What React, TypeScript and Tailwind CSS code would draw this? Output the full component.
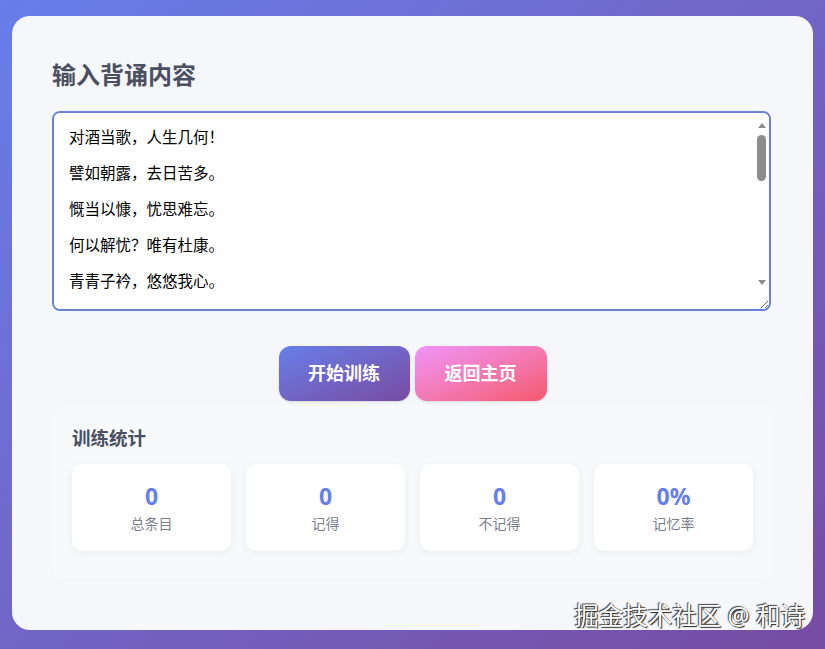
import React, { useState } from 'react';

const defaultText =
  '对酒当歌，人生几何！\n\n譬如朝露，去日苦多。\n\n慨当以慷，忧思难忘。\n\n何以解忧？唯有杜康。\n\n青青子衿，悠悠我心。\n\n但为君故，沉吟至今。\n\n呦呦鹿鸣，食野之苹。\n\n我有嘉宾，鼓瑟吹笙。';

const App: React.FC = () => {
  const [text, setText] = useState(defaultText);
  const stats = [
    { value: '0', label: '总条目' },
    { value: '0', label: '记得' },
    { value: '0', label: '不记得' },
    { value: '0%', label: '记忆率' },
  ];

  return (
    <div
      className="relative w-[825px] h-[649px] bg-gradient-to-br from-[#667eea] to-[#764ba2] px-[12px] pt-[16px]"
      style={{ fontFamily: '"Noto Sans", "Noto Sans CJK SC", sans-serif' }}
    >
      <div className="h-[614px] rounded-[18px] bg-[#f6f7fb] px-[40px] pt-[42px]">
        <h2 className="text-[24px] leading-[34px] font-bold text-[#4a5060]">输入背诵内容</h2>

        <div className="relative mt-[19px] w-[719px]">
          <textarea
            value={text}
            onChange={(e) => setText(e.target.value)}
            className="block w-[719px] h-[200px] resize-y rounded-[8px] border-2 border-[#6b80d8] bg-white pl-[15px] pr-[20px] pt-[14px] pb-2 text-[15.5px] leading-[18px] text-black outline-none"
            style={{ fontFamily: '"Noto Sans CJK SC", "Noto Sans", sans-serif' }}
          />
          {/* scrollbar look */}
          <div className="pointer-events-none absolute right-[2px] top-[2px] bottom-[18px] w-[15px] flex flex-col items-center">
            <div className="mt-[10px] w-0 h-0 border-l-[4px] border-r-[4px] border-b-[5px] border-l-transparent border-r-transparent border-b-[#8d8d8d]" />
            <div className="mt-[7px] w-[9px] h-[46px] rounded-full bg-[#8d8d8d]" />
            <div className="flex-1" />
            <div className="mb-[8px] w-0 h-0 border-l-[4px] border-r-[4px] border-t-[5px] border-l-transparent border-r-transparent border-t-[#8d8d8d]" />
          </div>
        </div>

        <div className="mt-[35px] flex justify-center gap-[5px]">
          <button className="w-[131px] h-[55px] rounded-[12px] bg-gradient-to-br from-[#667eea] to-[#764ba2] text-[18px] font-bold text-white shadow-sm">
            开始训练
          </button>
          <button className="w-[132px] h-[55px] rounded-[12px] bg-gradient-to-br from-[#f093fb] to-[#f5576c] text-[18px] font-bold text-white shadow-sm">
            返回主页
          </button>
        </div>

        <div className="mt-[5px] rounded-[12px] bg-[#f8f9fb] px-[20px] pt-[19px] pb-[28px]">
          <h3 className="text-[18.5px] leading-[26px] font-bold text-[#4a5060]">训练统计</h3>
          <div className="mt-[13px] grid grid-cols-4 gap-[15px]">
            {stats.map((s) => (
              <div
                key={s.label}
                className="h-[87px] rounded-[10px] bg-white shadow-[0_2px_8px_rgba(0,0,0,0.06)] flex flex-col items-center justify-center"
              >
                <div className="text-[23px] leading-[28px] font-bold text-[#667eea]">{s.value}</div>
                <div className="mt-[4px] text-[14px] leading-[20px] text-[#7a7f8c]">{s.label}</div>
              </div>
            ))}
          </div>
        </div>
      </div>

      <div
        className="absolute right-[20px] bottom-[17px] text-[24.5px] leading-[32px] text-white"
        style={{ textShadow: '1px 1px 1px #222, -1px -1px 1px #444' }}
      >
        掘金技术社区 @ 和诗
      </div>
    </div>
  );
};

export default App;
